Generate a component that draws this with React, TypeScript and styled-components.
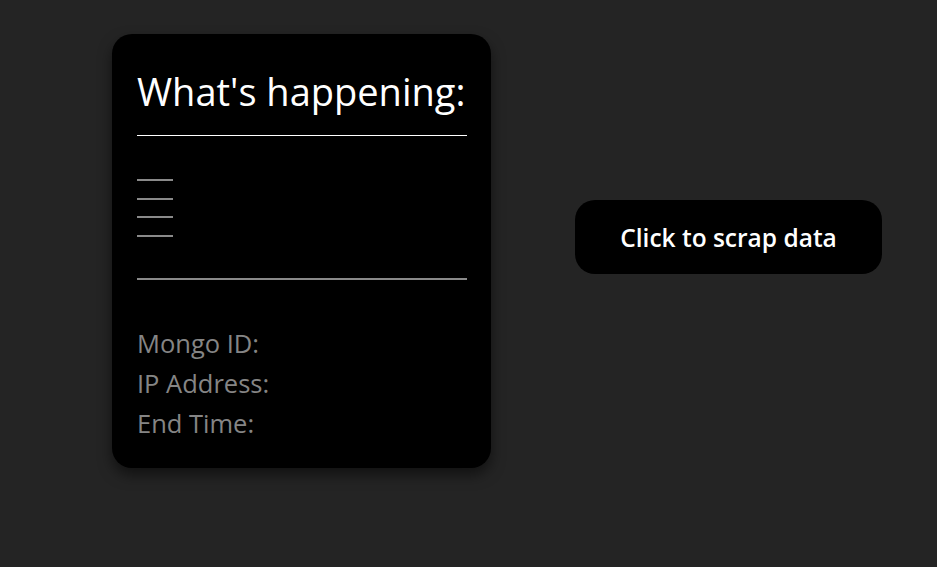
import styled, { createGlobalStyle } from "styled-components";

const GlobalStyle = createGlobalStyle`
    html, body {
        margin: 0;
        padding: 0;
        background-color: #242424;
        font-family: "Open Sans", "Noto Sans", sans-serif;
        color: #ffffff;
    }
`;

const fields = ["Mongo ID:", "IP Address:", "End Time:"];

const App = () => {
    return (
        <>
            <GlobalStyle />
            <StyledPage>
                <StyledCard>
                    <h2>What's happening:</h2>
                    <StyledDivider $color="#ffffff" $thick={1} />
                    <StyledSteps>
                        {[0, 1, 2, 3].map((i) => (
                            <StyledStep key={i} />
                        ))}
                    </StyledSteps>
                    <StyledDivider $color="#8a8a8a" $thick={2} />
                    <StyledInfo>
                        {fields.map((f) => (
                            <div key={f}>{f}</div>
                        ))}
                    </StyledInfo>
                </StyledCard>
                <StyledButton type="button">Click to scrap data</StyledButton>
            </StyledPage>
        </>
    );
};

const StyledPage = styled.main`
    display: flex;
    align-items: flex-start;
    gap: 84px;
    min-height: 567px;
    box-sizing: border-box;
    padding: 34px 0 0 112px;
`;

const StyledCard = styled.section`
    width: 379px;
    height: 434px;
    box-sizing: border-box;
    padding: 26px 25px 0 25px;
    background-color: #000000;
    border-radius: 20px;
    box-shadow: 0 7px 14px rgba(0, 0, 0, 0.5);

    h2 {
        margin: 0;
        font-size: 38px;
        font-weight: 400;
        line-height: 62px;
        white-space: nowrap;
    }
`;

const StyledDivider = styled.hr<{ $color: string; $thick: number }>`
    margin: 13px 0 0 0;
    border: none;
    height: ${({ $thick }) => $thick}px;
    width: 330px;
    background-color: ${({ $color }) => $color};
`;

const StyledSteps = styled.div`
    display: flex;
    flex-direction: column;
    gap: 16.5px;
    padding: 43px 0 28px 0;
`;

const StyledStep = styled.span`
    display: block;
    width: 36px;
    height: 2px;
    background-color: #8a8a8a;
`;

const StyledInfo = styled.div`
    margin-top: 43px;
    color: #858585;
    font-size: 25.5px;
    line-height: 40px;
`;

const StyledButton = styled.button`
    margin-top: 166px;
    width: 307px;
    height: 74px;
    border: none;
    border-radius: 20px;
    background-color: #000000;
    color: #ffffff;
    font-family: "Open Sans", "Noto Sans", sans-serif;
    font-size: 24.5px;
    font-weight: 600;
    cursor: pointer;
`;

export default App;
